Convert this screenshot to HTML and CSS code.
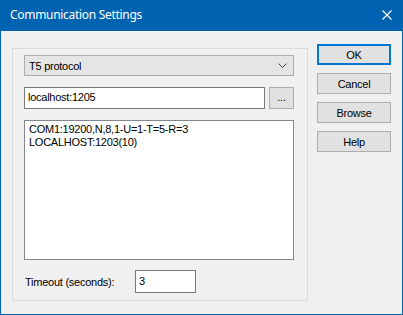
FILE: index.html
```html
<!DOCTYPE html>
<html lang="en">
<head>
    <meta charset="UTF-8">
    <title>Communication Settings</title>
    <link rel="stylesheet" href="styles.css">
</head>
<body>
    <div class="dialog">
        <div class="titlebar">
            <span class="title">Communication Settings</span>
            <svg class="close" width="10" height="10" viewBox="0 0 10 10">
                <path d="M0.5 0.5L9.5 9.5M9.5 0.5L0.5 9.5" stroke="#fff" stroke-width="1.2"/>
            </svg>
        </div>
        <div class="dialog-body">
            <div class="group">
                <div class="combo">
                    <span>T5 protocol</span>
                    <svg class="chevron" width="9" height="5" viewBox="0 0 9 5">
                        <path d="M0.5 0.5L4.5 4.5L8.5 0.5" fill="none" stroke="#444" stroke-width="1"/>
                    </svg>
                </div>
                <div class="address-row">
                    <div class="field address">localhost:1205</div>
                    <div class="btn small">...</div>
                </div>
                <div class="listbox">
                    <div>COM1:19200,N,8,1-U=1-T=5-R=3</div>
                    <div>LOCALHOST:1203(10)</div>
                </div>
                <div class="timeout-row">
                    <span class="label">Timeout (seconds):</span>
                    <div class="field timeout">3</div>
                </div>
            </div>
            <div class="actions">
                <div class="btn default">OK</div>
                <div class="btn">Cancel</div>
                <div class="btn">Browse</div>
                <div class="btn">Help</div>
            </div>
        </div>
    </div>
</body>
</html>
```
FILE: styles.css
```css
* {
	box-sizing: border-box;
}
body {
	margin: 0;
	font-family: "Liberation Sans", Arial, sans-serif;
	font-size: 11px;
	letter-spacing: -0.25px;
	color: #000;
}
.dialog {
	width: 403px;
	height: 315px;
	border: 1px solid #0063b1;
	border-top: none;
	background: #f0f0f0;
	display: flex;
	flex-direction: column;
}
.titlebar {
	height: 31px;
	background: #0063b1;
	display: flex;
	align-items: center;
	justify-content: space-between;
	padding: 0 10px 2px 9px;
	color: #fff;
}
.title {
	font-family: "Noto Sans", sans-serif;
	font-size: 12px;
	letter-spacing: -0.3px;
}
.dialog-body {
	display: flex;
	align-items: flex-start;
	padding: 17px 0 0 11px;
}
.group {
	width: 296px;
	height: 253px;
	border: 1px solid #dcdcdc;
	padding: 6px 0 0 11px;
}
.combo {
	width: 270px;
	height: 21px;
	background: #e5e5e5;
	border: 1px solid #adadad;
	display: flex;
	align-items: center;
	justify-content: space-between;
	padding: 0 6px 0 4px;
}
.address-row {
	display: flex;
	gap: 4px;
	margin-top: 11px;
}
.field {
	background: #fff;
	border: 1px solid #7a7a7a;
	padding: 3px 0 0 3px;
}
.address {
	width: 241px;
	height: 22px;
}
.listbox {
	width: 270px;
	height: 140px;
	margin-top: 11px;
	background: #fff;
	border: 1px solid #828790;
	padding: 2px 0 0 4px;
	line-height: 13px;
}
.timeout-row {
	display: flex;
	align-items: center;
	margin-top: 10px;
}
.label {
	width: 111px;
	padding-left: 1px;
}
.timeout {
	width: 61px;
	height: 23px;
	padding-top: 4px;
}
.actions {
	display: flex;
	flex-direction: column;
	gap: 8px;
	margin-left: 9px;
	margin-top: -4px;
}
.btn {
	width: 74px;
	height: 21px;
	background: #e1e1e1;
	border: 1px solid #adadad;
	display: flex;
	align-items: center;
	justify-content: center;
}
.btn.default {
	border: 2px solid #0078d7;
}
.btn.small {
	width: 25px;
	height: 22px;
	align-items: flex-end;
	padding-bottom: 5px;
}
```
